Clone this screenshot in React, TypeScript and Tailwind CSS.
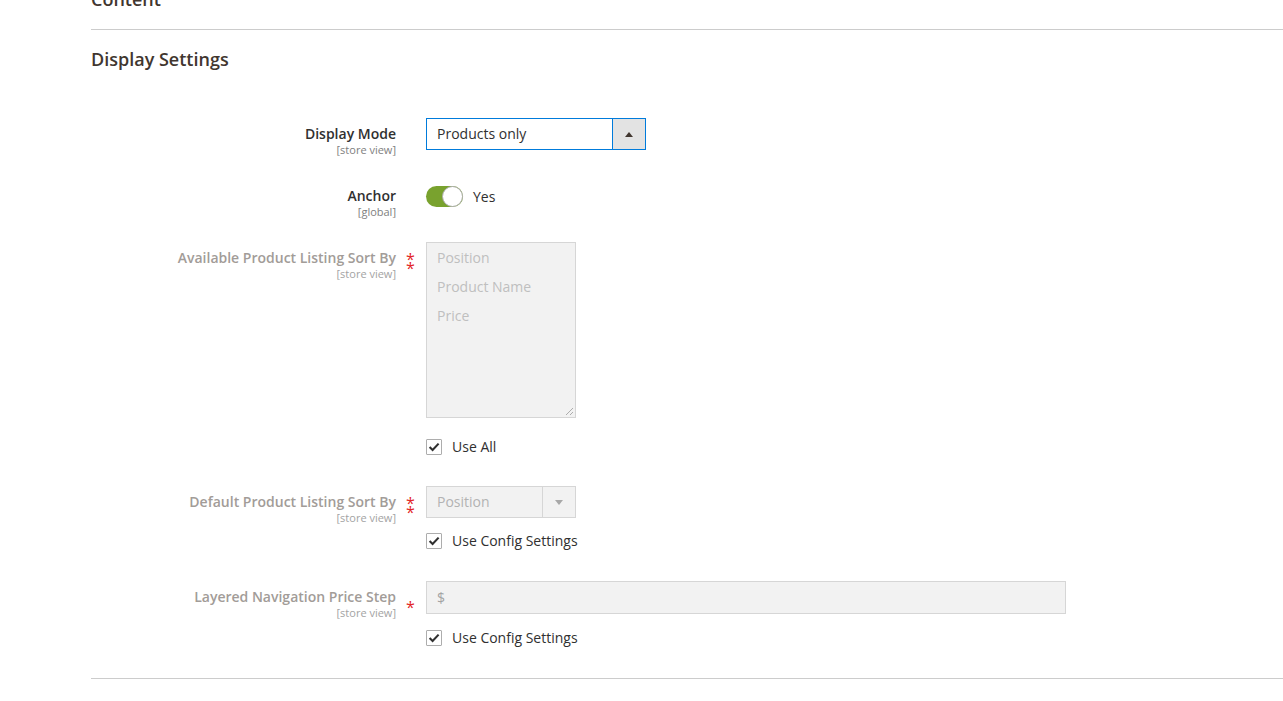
import React from "react";

// ─── Small pieces ────────────────────────────────────────────────────────────

// Required mark; the double one is drawn as a single two-line text
function RequiredMark({ count }: { count: number }) {
  return (
    <span
      className={`absolute left-[315px] whitespace-pre text-[16px] leading-[9px] text-[#e22626] ${
        count === 2 ? "top-[13px]" : "top-[22px]"
      }`}
    >
      {count === 2 ? "*\n*" : "*"}
    </span>
  );
}

interface FieldRowProps {
  label: string;
  scope: string;
  disabled?: boolean;
  required?: number;
  className?: string;
  children: React.ReactNode;
}

function FieldRow({ label, scope, disabled, required = 0, className = "", children }: FieldRowProps) {
  return (
    <div className={`flex ${className}`}>
      <div className="relative w-[335px] shrink-0 pr-[30px] pt-[7px] text-right">
        <div
          className={`text-[14px] leading-[18px] font-semibold ${
            disabled ? "text-[#a29c98]" : "text-[#303030]"
          }`}
        >
          {label}
        </div>
        <div className={`text-[11px] leading-[13px] ${disabled ? "text-[#a3a3a3]" : "text-[#808080]"}`}>
          {scope}
        </div>
        {required > 0 && <RequiredMark count={required} />}
      </div>
      <div className="flex flex-col">{children}</div>
    </div>
  );
}

function Checkbox({ label, className = "" }: { label: string; className?: string }) {
  return (
    <label className={`flex h-[18px] items-center gap-[10px] ${className}`}>
      <span className="flex h-[16px] w-[16px] items-center justify-center rounded-[1px] border border-[#adadad] bg-white">
        <svg viewBox="0 0 12 12" className="h-[12px] w-[12px]" aria-hidden="true">
          <path d="M1.6 6 4.6 9 10.6 2.6" fill="none" stroke="#303030" strokeWidth={2.1} />
        </svg>
      </span>
      <span className="text-[14px] leading-[18px] text-[#303030]">{label}</span>
    </label>
  );
}

// ─── App ─────────────────────────────────────────────────────────────────────

export default function App() {
  return (
    <div className="h-[701px] w-full overflow-hidden bg-white pl-[91px] font-['Open_Sans','Liberation_Sans',sans-serif]">
      {/* previous section title, cut off by the viewport */}
      <div className="mt-[-12px] border-b border-[#cccccc] pb-[19px] text-[18px] leading-[22px] font-semibold text-[#41362f]">
        Content
      </div>

      <div className="mt-[18px] text-[18px] leading-[22px] font-semibold text-[#41362f]">Display Settings</div>

      {/* Display Mode */}
      <FieldRow label="Display Mode" scope="[store view]" className="mt-[48px]">
        <div className="flex h-[32px] w-[220px] border border-[#007bdb] bg-white">
          <div className="flex flex-1 items-center pb-[1px] pl-[10px] text-[14px] text-[#303030]">Products only</div>
          <div className="flex w-[33px] items-center justify-center border-l border-[#007bdb] bg-[#e3e3e3]">
            <svg viewBox="0 0 8 5" className="h-[5px] w-[8px]" aria-hidden="true">
              <polygon points="0,5 4,0 8,5" fill="#41362f" />
            </svg>
          </div>
        </div>
      </FieldRow>

      {/* Anchor */}
      <FieldRow label="Anchor" scope="[global]" className="mt-[24px]">
        <div className="mt-[6px] flex items-center gap-[10px]">
          <div className="flex h-[21px] w-[37px] justify-end rounded-full bg-[#79a22e]">
            <div className="h-[21px] w-[21px] rounded-full border border-[#adadad] bg-white" />
          </div>
          <span className="text-[14px] leading-[18px] text-[#303030]">Yes</span>
        </div>
      </FieldRow>

      {/* Available Product Listing Sort By */}
      <FieldRow label="Available Product Listing Sort By" scope="[store view]" disabled required={2} className="mt-[24px]">
        <div className="relative h-[176px] w-[150px] border border-[#d6d6d6] bg-[#f2f2f2]">
          {["Position", "Product Name", "Price"].map((o) => (
            <div key={o} className="h-[29px] pl-[10px] text-[14px] leading-[29px] text-[#bfbfbf]">
              {o}
            </div>
          ))}
          <svg viewBox="0 0 9 9" className="absolute right-[1px] bottom-[1px] h-[9px] w-[9px]" aria-hidden="true">
            <path d="M1 8 8 1M5 8 8 5" stroke="#9a9a9a" strokeWidth={0.8} />
          </svg>
        </div>
        <Checkbox label="Use All" className="mt-[20px]" />
      </FieldRow>

      {/* Default Product Listing Sort By */}
      <FieldRow label="Default Product Listing Sort By" scope="[store view]" disabled required={2} className="mt-[30px]">
        <div className="flex h-[32px] w-[150px] border border-[#d6d6d6] bg-[#f2f2f2]">
          <div className="flex flex-1 items-center pb-[1px] pl-[10px] text-[14px] text-[#b3b3b3]">Position</div>
          <div className="flex w-[33px] items-center justify-center border-l border-[#d6d6d6]">
            <svg viewBox="0 0 8 5" className="h-[5px] w-[8px]" aria-hidden="true">
              <polygon points="0,0 8,0 4,5" fill="#a8a8a8" />
            </svg>
          </div>
        </div>
        <Checkbox label="Use Config Settings" className="mt-[14px]" />
      </FieldRow>

      {/* Layered Navigation Price Step */}
      <FieldRow label="Layered Navigation Price Step" scope="[store view]" disabled required={1} className="mt-[31px]">
        <div className="flex h-[33px] w-[640px] items-center border border-[#d6d6d6] bg-[#f2f2f2] pl-[10px] text-[14px] text-[#a3a3a3]">
          $
        </div>
        <Checkbox label="Use Config Settings" className="mt-[15px]" />
      </FieldRow>

      <div className="mt-[31px] border-t border-[#cccccc]" />
    </div>
  );
}
